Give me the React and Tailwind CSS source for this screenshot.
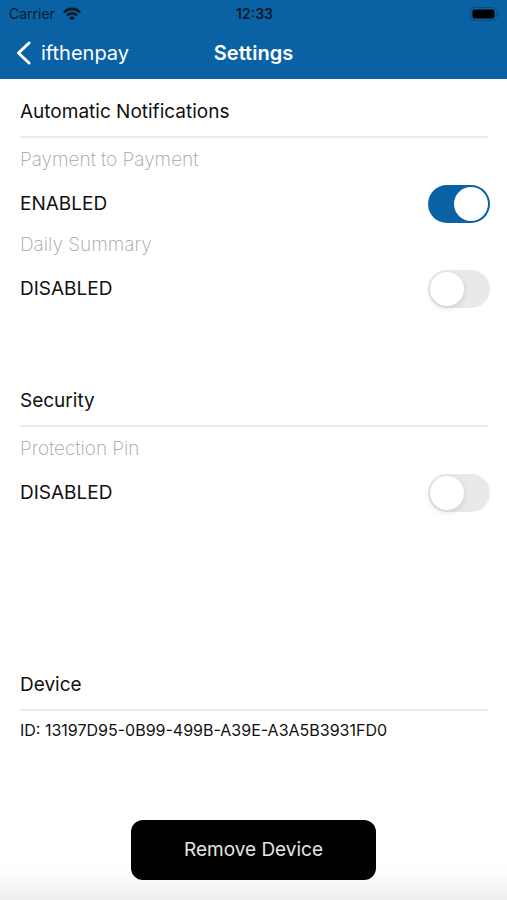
import { useState } from 'react';

function Section({ title, children }) {
  return (
    <section className="pl-5 pr-[17px] pt-[17px]">
      <h2 className="text-[19px] leading-8">{title}</h2>
      <div className="mr-0.5 mt-2 h-0.5 bg-[#ebebec]" />
      {children}
    </section>
  );
}

function ToggleRow({ id, label, checked, onChange }) {
  return (
    <div className="pt-2">
      <label htmlFor={id} className="block text-[19px] font-extralight leading-7 text-[#a3a3a5]">
        {label}
      </label>
      <div className="mt-[11px] flex items-center justify-between">
        <span className="text-[19px] leading-7">{checked ? 'ENABLED' : 'DISABLED'}</span>
        <input
          id={id}
          type="checkbox"
          role="switch"
          checked={checked}
          onChange={(e) => onChange(e.target.checked)}
          className="flex h-[38px] w-[62px] cursor-pointer appearance-none items-center rounded-full bg-[#e9e9ea] px-0.5 before:block before:size-[34px] before:rounded-full before:bg-white before:shadow-[0_2px_6px_rgba(0,0,0,0.12)] checked:justify-end checked:bg-[#0a62a4] checked:before:shadow-none"
        />
      </div>
    </div>
  );
}

export default function App() {
  const [payment, setPayment] = useState(true);
  const [daily, setDaily] = useState(false);
  const [pin, setPin] = useState(false);

  return (
    <div className="flex min-h-screen flex-col bg-linear-to-t from-[#efefef] to-white to-[32px] font-['Inter','Liberation_Sans',sans-serif] text-[#111]">
      <header className="bg-[#0a62a4]">
        {/* Status bar */}
        <div className="grid h-[27px] grid-cols-3 items-center pl-[9px] pr-[7px] text-sm leading-5 text-[#061a2b]">
          <div className="flex items-center gap-2">
            <span>Carrier</span>
            <svg width="18" height="14" viewBox="0 0 18 14" fill="none" stroke="currentColor" strokeWidth="2.7">
              <path d="M1 5.2C5.4 .7 12.6 .7 17 5.2" />
              <path d="M4 8.4C6.8 5.6 11.2 5.6 14 8.4" />
              <path d="M9 13.4L6.1 10.5C7.7 9 10.3 9 11.9 10.5Z" fill="currentColor" stroke="none" />
            </svg>
          </div>
          <span className="text-center font-semibold">12:33</span>
          <svg className="justify-self-end" width="30" height="14" viewBox="0 0 30 14">
            <rect x=".5" y=".5" width="26" height="13" rx="4" fill="none" stroke="#084b7d" />
            <rect x="2.5" y="2.5" width="22" height="9" rx="2" fill="#000" />
            <path d="M28 5c1.6 .6 1.6 3.4 0 4z" fill="#084b7d" />
          </svg>
        </div>

        <nav className="grid h-[52px] grid-cols-3 items-center px-4 text-white">
          <button type="button" className="flex items-center gap-2.5 text-[20px] leading-7">
            <svg width="15" height="24" viewBox="0 0 15 24" fill="none" stroke="currentColor" strokeWidth="3" strokeLinecap="round" strokeLinejoin="round">
              <path d="M13 2L2.5 12L13 22" />
            </svg>
            ifthenpay
          </button>
          <h1 className="text-center text-[20px] font-semibold leading-7">Settings</h1>
        </nav>
      </header>

      <main className="flex grow flex-col">
        <Section title="Automatic Notifications">
          <ToggleRow id="payment" label="Payment to Payment" checked={payment} onChange={setPayment} />
          <ToggleRow id="daily" label="Daily Summary" checked={daily} onChange={setDaily} />
        </Section>

        <div className="mt-[60px]">
          <Section title="Security">
            <ToggleRow id="pin" label="Protection Pin" checked={pin} onChange={setPin} />
          </Section>
        </div>

        <div className="mt-[140px]">
          <Section title="Device">
            <p className="pt-2 text-[16px] leading-[22px]">ID: 13197D95-0B99-499B-A39E-A3A5B3931FD0</p>
          </Section>
        </div>

        <div className="mt-auto flex justify-center pb-5 pt-8">
          <button type="button" className="rounded-xl bg-black px-[53px] py-4 text-[19px] leading-7 text-[#e5e5e5]">
            Remove Device
          </button>
        </div>
      </main>
    </div>
  );
}
